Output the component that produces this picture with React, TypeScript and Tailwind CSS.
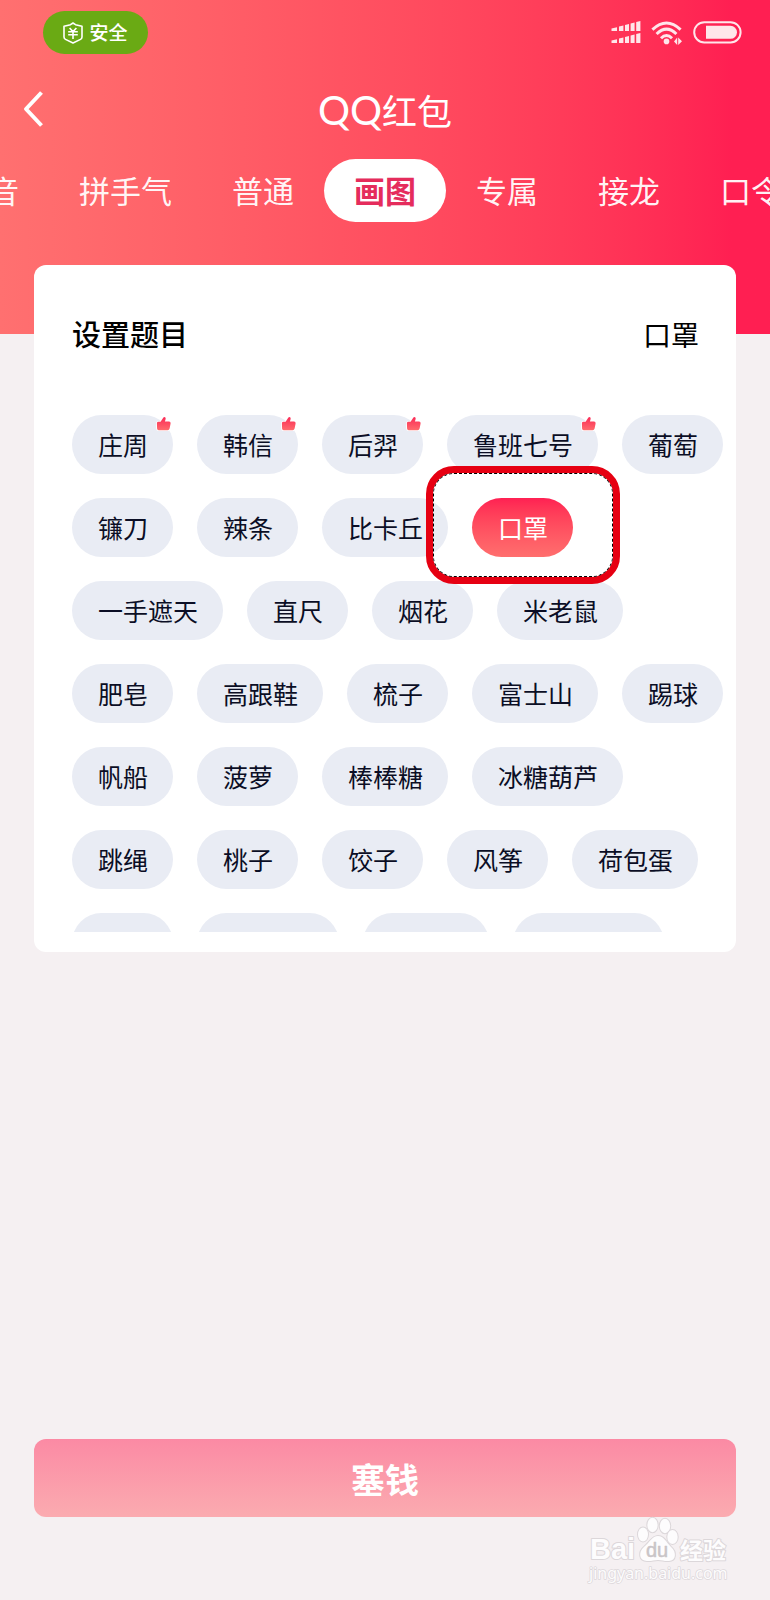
import { useState } from "react";

type Topic = { name: string; hot?: boolean };

const TABS = ["语音", "拼手气", "普通", "画图", "专属", "接龙"];

const TOPICS: Topic[] = [
  { name: "庄周", hot: true },
  { name: "韩信", hot: true },
  { name: "后羿", hot: true },
  { name: "鲁班七号", hot: true },
  { name: "葡萄" },
  { name: "镰刀" },
  { name: "辣条" },
  { name: "比卡丘" },
  { name: "口罩" },
  { name: "一手遮天" },
  { name: "直尺" },
  { name: "烟花" },
  { name: "米老鼠" },
  { name: "肥皂" },
  { name: "高跟鞋" },
  { name: "梳子" },
  { name: "富士山" },
  { name: "踢球" },
  { name: "帆船" },
  { name: "菠萝" },
  { name: "棒棒糖" },
  { name: "冰糖葫芦" },
  { name: "跳绳" },
  { name: "桃子" },
  { name: "饺子" },
  { name: "风筝" },
  { name: "荷包蛋" },
];

function ShieldIcon() {
  return (
    <svg viewBox="0 0 20 22" className="h-[22px] w-5" fill="none" stroke="white" strokeWidth="1.6" strokeLinejoin="round">
      <path d="M10 1 L12.5 2.7 L19 4.2 V15 Q19 16.6 17.5 17.4 L10 21 L2.5 17.4 Q1 16.6 1 15 V4.2 L7.5 2.7 Z" />
      <path d="M6.6 6 L10 9.6 L13.4 6 M5.2 9.8 H14.8 M5.2 12.8 H14.8 M10 9.6 V17" />
    </svg>
  );
}

function SignalIcon() {
  return (
    <svg viewBox="0 0 30 23" className="h-[23px] w-[30px]" fill="#ffe6ea">
      <path d="M0.5 7.6 L6 6.2 V10 H0.5Z M8 5.6 L12.4 4.4 V10 H8Z M14 4 L18 3 V10 H14Z M19.6 2.4 L23.6 1.4 V10 H19.6Z M25.2 1 L29.4 0 V10 H25.2Z" />
      <path d="M0.5 19.6 L6 18.2 V22 H0.5Z M8 17.6 L12.4 16.4 V22 H8Z M14 16 L18 15 V22 H14Z M19.6 14.4 L23.6 13.4 V22 H19.6Z M25.2 13 L29.4 12 V22 H25.2Z" />
    </svg>
  );
}

function WifiIcon() {
  return (
    <svg viewBox="0 0 32 24" className="h-6 w-8" fill="none" stroke="#ffe6ea" strokeWidth="3">
      <path d="M1.4 8.6 Q15.5 -4.6 29.6 8.6" />
      <path d="M5.6 13 Q15.500 3.4 25.4 13" />
      <path d="M10 17.200 Q15.500 11.600 21 17.200" />
      <circle cx="15.500" cy="20.400" r="2.800" fill="#ffe6ea" stroke="none" />
      <path d="M23 20.400 L26.200 16.600 V24 Z M27.200 16.600 V24 L31 20.200 Z" fill="#ffe6ea" stroke="none" />
    </svg>
  );
}

function BatteryIcon() {
  return (
    <svg viewBox="0 0 49 23" className="h-[23px] w-[49px]" fill="none">
      <rect x="1.2" y="1.2" width="46.4" height="20.2" rx="10.1" stroke="#ffe6ea" strokeWidth="2" />
      <path d="M13 4.8 H37.5 A6.5 6.5 0 0 1 37.5 17.8 H13 Z" fill="#ffe6ea" />
    </svg>
  );
}

function ThumbIcon() {
  return (
    <svg viewBox="0 0 18 18" className="absolute right-0 top-0 h-[18px] w-[18px]">
      <defs>
        <linearGradient id="thumb" x1="0" y1="0" x2="0" y2="1">
          <stop offset="0" stopColor="#fb2b57" />
          <stop offset="1" stopColor="#ff6a6c" />
        </linearGradient>
      </defs>
      <path
        d="M3.4 6.8 H5.6 L8.4 2.6 Q9.4 1.600 10.400 2.600 Q10.900 3.400 10.500 4.600 L9.900 6.600 H14 Q15.800 6.800 15.600 8.600 L14.600 13.600 Q14.200 15.200 12.600 15.200 H3.600 Q2.200 15.200 2.100 13.800 L1.900 8.200 Q2 6.800 3.400 6.800 Z"
        fill="url(#thumb)"
        stroke="white"
        strokeWidth="1.800"
        strokeLinejoin="round"
        paintOrder="stroke"
      />
    </svg>
  );
}

function Watermark() {
  return (
    <svg
      viewBox="0 0 144 74"
      className="pointer-events-none absolute bottom-[12px] right-[40px] h-[74px] w-36"
      fill="#fdfcfd"
      stroke="#dcd7da"
      strokeWidth="2"
      paintOrder="stroke"
      strokeLinejoin="round"
    >
      <text x="4" y="45" fontFamily="'Liberation Sans', sans-serif" fontSize="29" fontWeight="700">
        Bai
      </text>
      <ellipse cx="57" cy="20.5" rx="5" ry="7" />
      <ellipse cx="66.5" cy="11" rx="5.2" ry="7.2" />
      <ellipse cx="79" cy="12" rx="5.2" ry="7.2" />
      <ellipse cx="86.500" cy="23" rx="5.2" ry="7" />
      <path d="M72 22 C78 22 80 28 85 33 C91 38 90 47 83 47 C79 47.500 76 46 72 46 C68 46 65 47.500 61 47 C53 47 52 38 58 33 C64 28 66 22 72 22 Z" />
      <text x="60" y="43" fontFamily="'Liberation Sans', sans-serif" fontSize="20" fontWeight="400" fill="#c9c4c7" stroke="#c9c4c7" strokeWidth="0.5">
        du
      </text>
      <text x="94" y="45" fontFamily="'Noto Sans CJK SC', sans-serif" fontSize="23" fontWeight="700">
        经验
      </text>
      <text x="3" y="65" fontFamily="'Noto Sans', sans-serif" fontSize="16" strokeWidth="1.500">
        jingyan.baidu.com
      </text>
    </svg>
  );
}

export default function App() {
  const [tab, setTab] = useState("画图");
  const [topic, setTopic] = useState("口罩");

  const tabClass = (name: string) =>
    name === tab
      ? "h-[63px] shrink-0 rounded-full bg-white px-[30px] font-bold text-[#e52c5c]"
      : "h-[63px] shrink-0 px-[30px] text-white/95";

  return (
    <div className="relative flex min-h-screen flex-col overflow-hidden bg-[#f5f0f2] font-['Noto_Sans_CJK_SC',sans-serif]">
      <header className="h-[334px] bg-linear-to-r from-[#ff7070] to-[#ff1f52] to-95%">
        <div className="flex items-center justify-between pl-[43px] pr-7 pt-[11px]">
          <div className="flex h-[43px] w-[105px] items-center justify-center gap-1.5 rounded-full bg-[#6aaa14] text-[19px] font-medium text-white">
            <ShieldIcon />
            安全
          </div>
          <div className="flex items-center gap-2.5">
            <SignalIcon />
            <WifiIcon />
            <BatteryIcon />
          </div>
        </div>

        <div className="mt-7 grid grid-cols-[1fr_auto_1fr] items-center px-[22px]">
          <button type="button" aria-label="返回" className="w-6 pb-0.5">
            <svg viewBox="0 0 24 38" className="h-[38px] w-6" fill="none" stroke="white" strokeWidth="4" strokeLinejoin="round">
              <path d="M19.500 2.500 L4 19 L19.500 35.500" />
            </svg>
          </button>
          <h1 className="flex items-center text-[35px] leading-[56px] text-white">
            <span className="font-['Lato',sans-serif] text-[40px]">QQ</span>
            <span>红包</span>
          </h1>
        </div>

        <nav className="mt-[21px] flex justify-center overflow-hidden whitespace-nowrap text-[31px]">
          {TABS.map((name) => (
            <button key={name} type="button" onClick={() => setTab(name)} className={tabClass(name)}>
              {name}
            </button>
          ))}
          <button type="button" className="h-[63px] shrink-0 pl-[30px] pr-[61px] text-white/95">
            口令
          </button>
        </nav>
      </header>

      <main className="-mt-[69px] flex flex-1 flex-col px-[34px]">
        <section className="rounded-xl bg-white pb-5 pl-[38px]">
          <div className="flex h-[150px] items-center justify-between pb-3 pr-[37px] text-black">
            <h2 className="text-[29px] font-medium">设置题目</h2>
            <span className="text-[28px]">{topic}</span>
          </div>

          <div className="flex h-[517px] flex-wrap content-start gap-6 overflow-hidden">
            {TOPICS.map(({ name, hot }) => (
              <div key={name} className="relative">
                <button
                  type="button"
                  onClick={() => setTopic(name)}
                  className={
                    name === topic
                      ? "block h-[59px] rounded-full bg-linear-to-b from-[#ff1f52] to-[#ff6e6e] pl-[26px] pr-[25px] text-[25px] text-white"
                      : "block h-[59px] rounded-full bg-[#e9ecf4] pl-[26px] pr-[25px] text-[25px] text-[#0b0e25]"
                  }
                >
                  {name}
                </button>
                {hot && <ThumbIcon />}
                {name === topic && (
                  <div className="pointer-events-none absolute -bottom-[27px] -left-[46px] -right-[47px] -top-8 z-10 rounded-[28px] border-[7px] border-[#e60012]">
                    <div className="h-full rounded-[21px] border border-dashed border-black" />
                  </div>
                )}
              </div>
            ))}
            <div className="h-[59px] w-[101px] rounded-full bg-[#e9ecf4]" />
            <div className="h-[59px] w-[142px] rounded-full bg-[#e9ecf4]" />
            <div className="h-[59px] w-[126px] rounded-full bg-[#e9ecf4]" />
            <div className="h-[59px] w-[151px] rounded-full bg-[#e9ecf4]" />
          </div>
        </section>

        <button
          type="button"
          className="mb-[83px] mt-auto h-[78px] rounded-xl bg-linear-to-b from-[#fb8aa4] to-[#fbabb0] text-[34px] font-bold text-white"
        >
          塞钱
        </button>
      </main>

      <Watermark />
    </div>
  );
}
